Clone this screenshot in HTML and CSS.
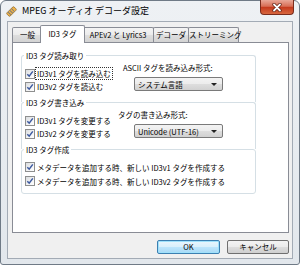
FILE: index.html
```html
<!DOCTYPE html>
<html lang="ja">
<head>
<meta charset="utf-8">
<title>MPEG オーディオ デコーダ設定</title>
<link rel="stylesheet" href="styles.css">
</head>
<body>
<div class="window">
  <div class="titlebar">
    <svg class="appicon" viewBox="0 0 12 12" width="11" height="11">
      <g transform="rotate(-45 6 6)">
        <rect x="0.5" y="3.5" width="11" height="5" rx="1.2" fill="#f0b44a" stroke="#7d5a22" stroke-width="0.7"/>
        <path d="M3 3.8v4.4M5.6 3.8v4.4M8.2 3.8v4.4" stroke="#7c7c7c" stroke-width="1.1"/>
      </g>
    </svg>
    <span class="title">MPEG オーディオ デコーダ設定</span>
    <div class="close">
      <svg viewBox="0 0 10 9" width="10" height="9">
        <path d="M2 1.5L8 7.5M8 1.5L2 7.5" stroke="#5b1d10" stroke-width="3.2" stroke-linecap="round"/>
        <path d="M2 1.5L8 7.5M8 1.5L2 7.5" stroke="#ffffff" stroke-width="1.8" stroke-linecap="round"/>
      </svg>
    </div>
  </div>
  <div class="client">
    <div class="tabs">
      <div class="tab t1">一般</div>
      <div class="tab t2 active">ID3 タグ</div>
      <div class="tab t3">APEv2 と Lyrics3</div>
      <div class="tab t4">デコーダ</div>
      <div class="tab t5">ストリーミング</div>
    </div>
    <div class="panel">
      <fieldset class="group g1">
        <legend>ID3 タグ読み取り</legend>
        <div class="cols">
          <div class="checks">
            <div class="check"><span class="box"><svg viewBox="0 0 8 8" width="8" height="8"><path d="M1.3 4.2L3.2 6.2L6.8 1.4" fill="none" stroke="#3d5aa0" stroke-width="1.5"/></svg></span><span class="lbl focus">ID3v1 タグを読み込む</span></div>
            <div class="check"><span class="box"><svg viewBox="0 0 8 8" width="8" height="8"><path d="M1.3 4.2L3.2 6.2L6.8 1.4" fill="none" stroke="#3d5aa0" stroke-width="1.5"/></svg></span><span class="lbl">ID3v2 タグを読込む</span></div>
          </div>
          <div class="field f1">
            <div class="flabel">ASCII タグを読み込み形式:</div>
            <div class="select"><span>システム言語</span><span class="arrow"></span></div>
          </div>
        </div>
      </fieldset>
      <fieldset class="group g2">
        <legend>ID3 タグ書き込み</legend>
        <div class="cols">
          <div class="checks">
            <div class="check"><span class="box"><svg viewBox="0 0 8 8" width="8" height="8"><path d="M1.3 4.2L3.2 6.2L6.8 1.4" fill="none" stroke="#3d5aa0" stroke-width="1.5"/></svg></span><span class="lbl">ID3v1 タグを変更する</span></div>
            <div class="check"><span class="box"><svg viewBox="0 0 8 8" width="8" height="8"><path d="M1.3 4.2L3.2 6.2L6.8 1.4" fill="none" stroke="#3d5aa0" stroke-width="1.5"/></svg></span><span class="lbl">ID3v2 タグを変更する</span></div>
          </div>
          <div class="field f2">
            <div class="flabel">タグの書き込み形式:</div>
            <div class="select"><span>Unicode (UTF-16)</span><span class="arrow"></span></div>
          </div>
        </div>
      </fieldset>
      <fieldset class="group g3">
        <legend>ID3 タグ作成</legend>
        <div class="checks wide">
          <div class="check"><span class="box"><svg viewBox="0 0 8 8" width="8" height="8"><path d="M1.3 4.2L3.2 6.2L6.8 1.4" fill="none" stroke="#3d5aa0" stroke-width="1.5"/></svg></span><span class="lbl">メタデータを追加する時、新しい ID3v1 タグを作成する</span></div>
          <div class="check"><span class="box"><svg viewBox="0 0 8 8" width="8" height="8"><path d="M1.3 4.2L3.2 6.2L6.8 1.4" fill="none" stroke="#3d5aa0" stroke-width="1.5"/></svg></span><span class="lbl">メタデータを追加する時、新しい ID3v2 タグを作成する</span></div>
        </div>
      </fieldset>
    </div>
    <div class="buttons">
      <div class="btn default">OK</div>
      <div class="btn">キャンセル</div>
    </div>
  </div>
</div>
</body>
</html>
```

FILE: styles.css
```css
* { box-sizing: border-box; }
html, body { margin: 0; padding: 0; }
body {
  width: 300px;
  height: 265px;
  overflow: hidden;
  background: #ffffff;
  font-family: "Noto Sans CJK JP", "Noto Sans", sans-serif;
  font-size: 7.5px;
  color: #000;
}
.window {
  width: 300px;
  height: 265px;
  border: 1px solid #6f7a86;
  border-radius: 6px 6px 3px 3px;
  background: linear-gradient(#eef1f4, #e2e7ec);
  display: flex;
  flex-direction: column;
}
.titlebar {
  height: 20px;
  display: flex;
  align-items: center;
  padding-left: 5px;
}
.appicon { flex: none; }
.title {
  margin-left: 5px;
  font-size: 9px;
  line-height: 12px;
}
.close {
  margin-left: auto;
  margin-right: 5px;
  margin-top: -1px;
  align-self: flex-start;
  width: 34px;
  height: 15px;
  border: 1px solid #7a2c1c;
  border-top: none;
  border-radius: 0 0 4px 4px;
  background: linear-gradient(#e9a898, #d86e55 45%, #c53a1d 52%, #d7673f);
  display: flex;
  align-items: center;
  justify-content: center;
}
.client {
  flex: 1;
  margin: 0 6px 5px;
  border: 1px solid #a3abb5;
  background: #f0f0f0;
  padding: 3px 3px 0 4px;
  display: flex;
  flex-direction: column;
}
.tabs {
  height: 17px;
  display: flex;
  align-items: flex-end;
  position: relative;
  z-index: 1;
}
.tab {
  height: 15px;
  border: 1px solid #898c95;
  border-bottom: none;
  border-radius: 2px 2px 0 0;
  background: linear-gradient(#f4f4f4, #ebebeb 50%, #dedede 50%, #d3d3d3);
  line-height: 14px;
  text-align: center;
  white-space: nowrap;
  margin-left: -1px;
}
.t1 { width: 31px; margin-left: 0; }
.t2 { width: 45px; }
.t3 { width: 72px; }
.t4 { width: 36px; }
.t5 { width: 51px; }
.tab.active {
  height: 18px;
  background: #fff;
  margin: 0 -2px -1px -3px;
  line-height: 16px;
  position: relative;
  z-index: 2;
}
.panel {
  height: 191px;
  border: 1px solid #898c95;
  background: #fff;
  padding: 8px 0 0 8px;
}
.group {
  margin: 0;
  padding: 0;
  width: 235px;
  min-width: 0;
  border: 1px solid #d5dfe5;
  border-radius: 3px;
}
.group legend {
  margin-left: 2px;
  padding: 0 2px;
  height: 9px;
  line-height: 9px;
  background: #fff;
}
.g1, .g2 {
  height: 51px;
  border-bottom: none;
  border-radius: 3px 3px 0 0;
}
.g2, .g3 { margin-top: -4px; }
.g3 { height: 49px; }
.cols {
  display: grid;
  grid-template-columns: 96px 1fr;
  padding-top: 3px;
}
.checks { padding: 4px 0 0 3px; }
.check {
  height: 13px;
  display: flex;
  align-items: center;
  gap: 1px;
  white-space: nowrap;
}
.checks.wide { padding-top: 6px; }
.checks.wide .check { height: 14px; }
.box {
  flex: none;
  width: 10px;
  height: 10px;
  border: 1px solid #8e8f8f;
  background: linear-gradient(135deg, #dadde0, #f7f7f7 70%, #ffffff);
  display: flex;
  align-items: center;
  justify-content: center;
}
.lbl {
  display: inline-block;
  padding: 0 1px;
  line-height: 11px;
}
.focus { outline: 1px dotted #333; outline-offset: 0; }
.field { display: flex; flex-direction: column; }
.flabel { line-height: 9px; white-space: nowrap; }
.f1 .flabel { padding-left: 5px; }
.select {
  margin: 5px 0 0 16px;
  width: 89px;
  height: 14px;
  border: 1px solid #7a7a7a;
  border-radius: 2px;
  background: linear-gradient(#f3f3f3, #ececec 50%, #dedede 50%, #d1d1d1);
  display: flex;
  align-items: center;
  padding-left: 3px;
  white-space: nowrap;
}
.arrow {
  margin-left: auto;
  margin-right: 5px;
  width: 0;
  height: 0;
  border-left: 3px solid transparent;
  border-right: 3px solid transparent;
  border-top: 3px solid #222;
}
.buttons {
  margin-top: 7px;
  display: flex;
  justify-content: flex-end;
  gap: 7px;
}
.btn {
  height: 14px;
  width: 62px;
  border: 1px solid #707070;
  border-radius: 2px;
  background: linear-gradient(#f3f3f3, #ebebeb 50%, #dddddd 50%, #cfcfcf);
  text-align: center;
  line-height: 12px;
}
.btn.default {
  width: 63px;
  border-color: #3c7fb1;
  background: linear-gradient(#eaf6fd, #d9f0fc 50%, #bee6fd 50%, #a7d9f5);
  box-shadow: inset 0 0 0 1px #9fe1fb;
}
```
